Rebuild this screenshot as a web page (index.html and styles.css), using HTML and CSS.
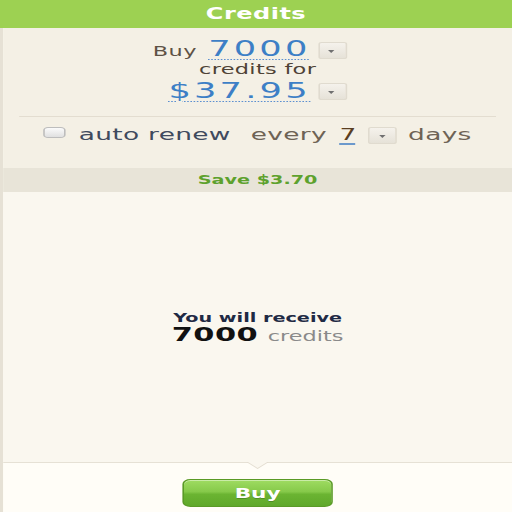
FILE: index.html
```html
<!DOCTYPE html>
<html>
<head>
<meta charset="utf-8">
<title>Credits</title>
<link rel="stylesheet" href="styles.css">
</head>
<body>
<div class="widget">
  <div class="header">Credits</div>
  <div class="panel">
    <div class="top">
      <div class="row row-buy"><span class="label">Buy</span><span class="num num-qty">7000</span><span class="dd dd-1"><i class="arrow"></i></span></div>
      <div class="row row-for">credits for</div>
      <div class="row row-price"><span class="num num-price">$37.95</span><span class="dd dd-2"><i class="arrow"></i></span></div>
      <div class="sep"></div>
      <div class="renew"><input type="checkbox" class="cb"><span class="auto">auto renew</span><span class="every">every</span><span class="days-num">7</span><span class="dd dd-3"><i class="arrow"></i></span><span class="days">days</span></div>
    </div>
    <div class="save">Save $3.70</div>
    <div class="content">
      <div class="receive">You will receive</div>
      <div class="total"><span class="big">7000</span><span class="unit">credits</span></div>
    </div>
    <div class="footer"><button class="buy">Buy</button></div>
  </div>
</div>
</body>
</html>
```

FILE: styles.css
```css
html, body {
  margin: 0;
  padding: 0;
  width: 512px;
  height: 512px;
  overflow: hidden;
}
body {
  font-family: "DejaVu Sans", Verdana, sans-serif;
  background: #fffdf7;
}
.widget {
  width: 320px;
  height: 512px;
  transform: scaleX(1.6);
  transform-origin: 0 0;
  display: flex;
  flex-direction: column;
}
.header {
  height: 28px;
  background: #9dd152;
  color: #fff;
  font-weight: bold;
  font-size: 15px;
  line-height: 28px;
  text-align: center;
  letter-spacing: 0.3px;
}
.panel {
  flex: 1;
  display: flex;
  flex-direction: column;
  border-left: 2.5px solid #e6e1d5;
}
.top {
  height: 140px;
  box-sizing: border-box;
  background: #f4f0e5;
  padding-top: 10.2px;
  display: flex;
  flex-direction: column;
}
.row {
  text-align: center;
  white-space: nowrap;
}
.row-buy {
  font-size: 22px;
  line-height: 22px;
  padding-right: 10px;
}
.label {
  font-size: 14px;
  line-height: 1;
  color: #5e5245;
  letter-spacing: 0.3px;
  margin-right: 7px;
}
.num {
  display: inline-block;
  color: #3d7fc6;
  letter-spacing: 2px;
  text-decoration: underline dotted #5b8fd0;
  text-decoration-thickness: 1px;
  text-underline-offset: 3px;
}
.num-qty { line-height: 22px; }
.num-price { line-height: 24px; }
.dd {
  display: inline-block;
  position: relative;
  width: 18px;
  height: 17px;
  box-sizing: border-box;
  border: 1px solid #e0dbcf;
  border-radius: 2px;
  background: linear-gradient(#f5f2ec, #e6e2d8);
  margin-left: 4.5px;
}
.arrow {
  position: absolute;
  left: 50%;
  top: 7px;
  margin-left: -2.5px;
  width: 0;
  height: 0;
  border-left: 2.5px solid transparent;
  border-right: 2.5px solid transparent;
  border-top: 3px solid #707070;
}
.dd-1 { vertical-align: -3px; }
.row-for {
  margin-top: 1.5px;
  font-size: 14px;
  line-height: 14px;
  color: #4e4236;
  letter-spacing: 0.2px;
}
.row-price {
  font-size: 22px;
  line-height: 24px;
  margin-top: 3.7px;
}
.dd-2 { vertical-align: -2px; }
.sep {
  margin: 12.6px 10px 0;
  border-top: 1px solid #e3ddd0;
}
.renew {
  margin-top: 8.3px;
  font-size: 16.5px;
  line-height: 20px;
  text-align: center;
  white-space: nowrap;
  letter-spacing: 0.2px;
}
.cb {
  appearance: none;
  -webkit-appearance: none;
  display: inline-block;
  box-sizing: border-box;
  width: 14px;
  height: 11px;
  margin: 0 8px 0 0;
  border: 1px solid #bdbdbd;
  border-radius: 3px;
  background: linear-gradient(#fbfbfb, #e0e0e0);
  vertical-align: 2px;
}
.auto {
  color: #3f4a5e;
  margin-right: 12.5px;
}
.every {
  color: #6e6355;
  margin-right: 6.6px;
}
.days-num {
  display: inline-block;
  padding: 0 1.2px;
  color: #5a3e22;
  text-decoration: underline dashed #4f86c6;
  text-underline-offset: 3px;
}
.dd-3 {
  vertical-align: -4px;
  margin-left: 6px;
  margin-right: 7px;
}
.days {
  color: #6e6355;
}
.save {
  height: 24px;
  background: #e8e4d8;
  color: #5da12d;
  font-weight: bold;
  font-size: 12px;
  line-height: 24px;
  text-align: center;
}
.content {
  flex: 1;
  background: #faf7ef;
  display: flex;
  flex-direction: column;
  align-items: center;
  justify-content: center;
  padding-top: 1px;
}
.receive {
  font-weight: bold;
  font-size: 12px;
  line-height: 14px;
  margin-bottom: 1.5px;
  color: #1f2a44;
}
.total {
  line-height: 16px;
  white-space: nowrap;
}
.big {
  display: inline-block;
  line-height: 16px;
  font-weight: bold;
  font-size: 19px;
  color: #111;
  letter-spacing: 0.3px;
  margin-right: 6px;
}
.unit {
  font-size: 14px;
  color: #8a8a8a;
}
.footer {
  position: relative;
  height: 33px;
  border-top: 1px solid #e6e1d5;
  background: #fffdf7;
  display: flex;
  justify-content: center;
  padding-top: 16px;
}
.footer::before,
.footer::after {
  content: "";
  position: absolute;
  left: 50%;
  width: 0;
  height: 0;
}
.footer::before {
  top: -1px;
  margin-left: -7px;
  border-left: 7px solid transparent;
  border-right: 7px solid transparent;
  border-top: 7px solid #e3ddd0;
}
.footer::after {
  top: -1px;
  margin-left: -6px;
  border-left: 6px solid transparent;
  border-right: 6px solid transparent;
  border-top: 6px solid #faf7ef;
}
.buy {
  width: 94px;
  height: 28px;
  margin: 0;
  padding: 0;
  border: 1px solid #5a9a26;
  border-radius: 5px;
  background: linear-gradient(#9fdc62 0%, #86c94a 45%, #6bb432 55%, #5fa82a 100%);
  box-shadow: inset 0 1px 0 rgba(255, 255, 255, 0.45);
  color: #fff;
  font-family: "DejaVu Sans", Verdana, sans-serif;
  font-weight: bold;
  font-size: 13.5px;
  text-shadow: 0 1px 0 rgba(0, 0, 0, 0.2);
  align-self: flex-start;
}
```
